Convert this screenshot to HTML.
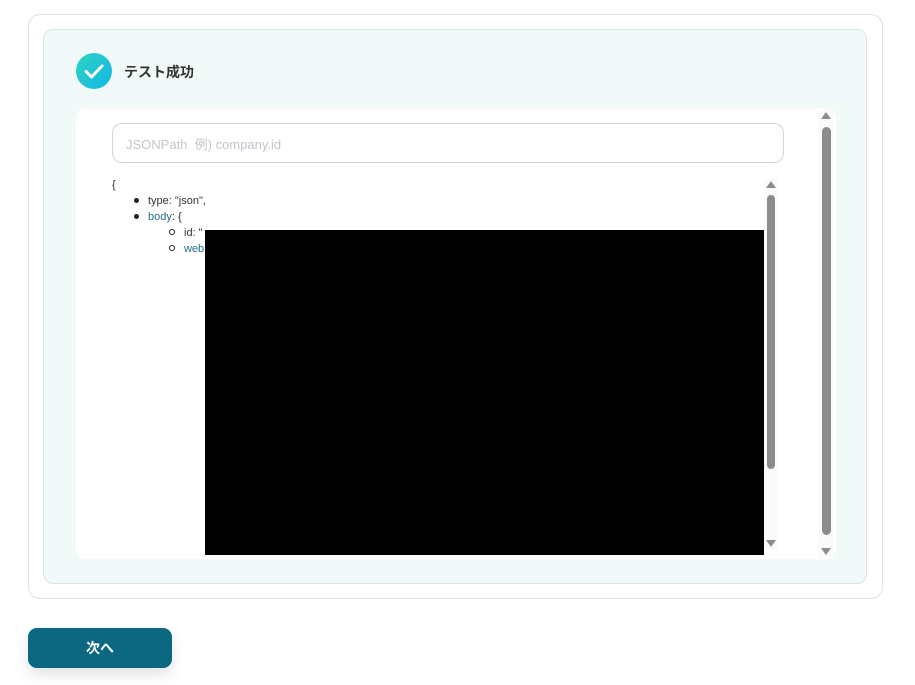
<!DOCTYPE html>
<html><head><meta charset="utf-8"><style>
*{margin:0;padding:0;box-sizing:border-box}
body{width:915px;height:685px;background:#fff;font-family:"Liberation Sans","Noto Sans CJK JP",sans-serif;position:relative;overflow:hidden}
.a{position:absolute}
.d{display:inline-block;width:5px;height:5px;border-radius:50%;background:#222;vertical-align:middle;margin-right:9px;position:relative;top:-1px}
.c{display:inline-block;width:6px;height:6px;border-radius:50%;border:1px solid #222;vertical-align:middle;margin-right:9px;position:relative;top:-1px}
</style></head><body>
<div class="a" style="left:28px;top:14px;width:855px;height:585px;border:1px solid #e0e0e6;border-radius:12px"></div>
<div class="a" style="left:43px;top:29px;width:824px;height:555px;border:1px solid #dde3e6;border-radius:10px;background:#f1f9f9"></div>
<div class="a" style="left:76px;top:53px;width:36px;height:36px;border-radius:50%;background:linear-gradient(135deg,#2fd3c0,#12b6e6)"></div>
<svg class="a" style="left:76px;top:53px" width="36" height="36"><path d="M10 18.5l5.5 5.5L26 13" stroke="#fff" stroke-width="3" fill="none" stroke-linecap="round" stroke-linejoin="round"/></svg>
<div class="a" style="left:124px;top:62px;font-size:14px;font-weight:bold;color:#333">テスト成功</div>
<div class="a" style="left:76px;top:109px;width:760px;height:450px;background:#fff;border-radius:10px"></div>
<div class="a" style="left:818px;top:110px;width:16px;height:448px;background:#fafafa"></div>
<div class="a" style="left:821px;top:112px;width:0;height:0;border-left:5px solid transparent;border-right:5px solid transparent;border-bottom:7px solid #8c8c8c"></div>
<div class="a" style="left:822px;top:127px;width:9px;height:408px;background:#8c8c8c;border-radius:5px"></div>
<div class="a" style="left:821px;top:548px;width:0;height:0;border-left:5px solid transparent;border-right:5px solid transparent;border-top:7px solid #8c8c8c"></div>
<div class="a" style="left:112px;top:123px;width:672px;height:40px;border:1px solid #cfd3da;border-radius:10px;padding:10px 13px;font-size:13px;color:#c2c5cb">JSONPath&nbsp; 例) company.id</div>
<div class="a" style="left:764px;top:178px;width:14px;height:372px;background:#fafafa"></div>
<div class="a" style="left:766px;top:181px;width:0;height:0;border-left:5px solid transparent;border-right:5px solid transparent;border-bottom:7px solid #8c8c8c"></div>
<div class="a" style="left:767px;top:195px;width:8px;height:274px;background:#8c8c8c;border-radius:4px"></div>
<div class="a" style="left:766px;top:540px;width:0;height:0;border-left:5px solid transparent;border-right:5px solid transparent;border-top:7px solid #8c8c8c"></div>
<div class="a" style="left:112px;top:177px;font-size:11px;color:#333;line-height:16px">
<div>{</div>
<div style="padding-left:22px"><span class="d"></span>type: "json",</div>
<div style="padding-left:22px"><span class="d"></span><span style="color:#1f6f8b">body</span>: {</div>
<div style="padding-left:57px"><span class="c"></span>id: "</div>
<div style="padding-left:57px"><span class="c"></span><span style="color:#1f6f8b">web</span></div>
</div>
<div class="a" style="left:205px;top:230px;width:559px;height:325px;background:#000"></div>
<div class="a" style="left:28px;top:628px;width:144px;height:40px;background:#0b6880;border-radius:9px;box-shadow:0 6px 14px rgba(0,0,0,.12);color:#fff;font-weight:bold;font-size:14px;text-align:center;line-height:40px">次へ</div>
</body></html>
